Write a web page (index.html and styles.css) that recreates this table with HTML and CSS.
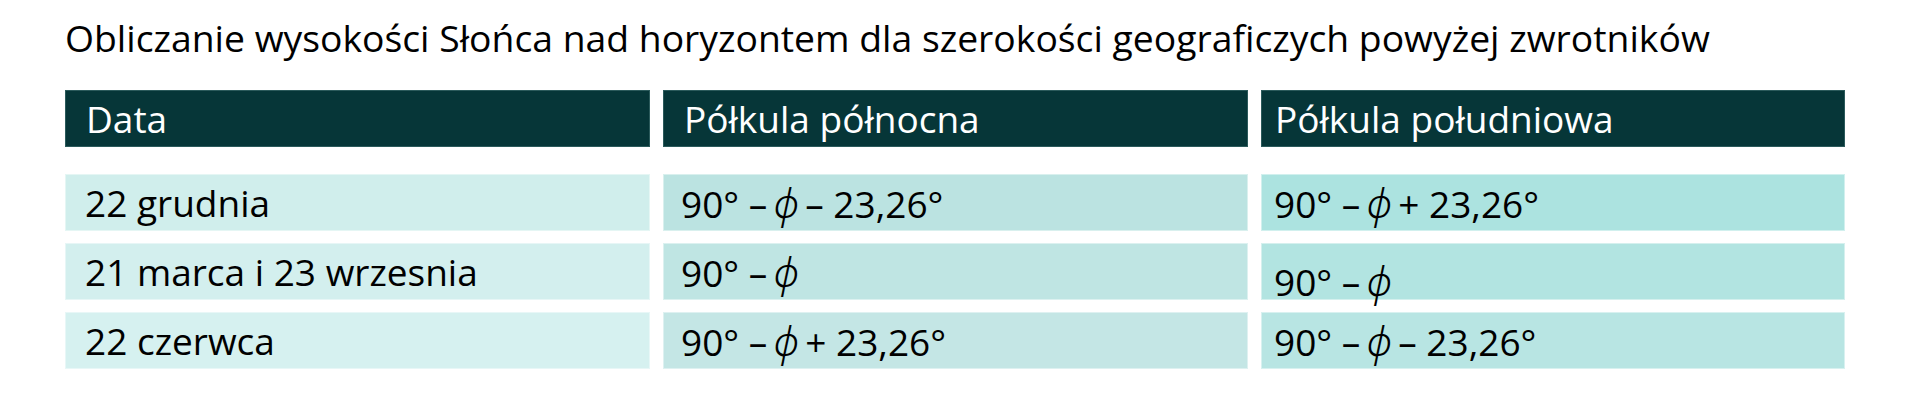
FILE: index.html
```html
<!DOCTYPE html>
<html lang="pl">
<head>
<meta charset="utf-8">
<title>Obliczanie wysokości Słońca</title>
<link rel="stylesheet" href="styles.css">
</head>
<body>
<h1 class="title">Obliczanie wysokości Słońca nad horyzontem dla szerokości geograficzych powyżej zwrotników</h1>
<div class="grid heads">
  <div class="head c1">Data</div>
  <div class="head c2">Półkula północna</div>
  <div class="head c3">Półkula południowa</div>
</div>
<div class="grid rows">
  <div class="cell c1 r1">22 grudnia</div>
  <div class="cell c2 r1">90° –&#8201;<span class="phi">ϕ</span>&#8201;– 23,26°</div>
  <div class="cell c3 r1">90° –&#8201;<span class="phi">ϕ</span>&#8201;+ 23,26°</div>

  <div class="cell c1 r2">21 marca i 23 wrzesnia</div>
  <div class="cell c2 r2">90° –&#8201;<span class="phi">ϕ</span></div>
  <div class="cell c3 r2 low">90° –&#8201;<span class="phi">ϕ</span></div>

  <div class="cell c1 r3">22 czerwca</div>
  <div class="cell c2 r3">90° –&#8201;<span class="phi">ϕ</span>&#8201;+ 23,26°</div>
  <div class="cell c3 r3">90° –&#8201;<span class="phi">ϕ</span>&#8201;– 23,26°</div>
</div>
</body>
</html>
```
FILE: styles.css
```css
html, body {
  margin: 0;
  padding: 0;
  background: #ffffff;
}
body {
  padding: 13px 0 0 65px;
  font-family: "Open Sans", "DejaVu Sans", sans-serif;
  color: #000;
}
.title {
  margin: 0;
  font-size: 37.3px;
  font-weight: 400;
  line-height: 50px;
  white-space: nowrap;
}
.grid {
  width: 1780px;
  display: grid;
  grid-template-columns: 585px 585px 584px;
  grid-auto-rows: 57px;
  column-gap: 13px;
  row-gap: 12px;
}
.heads { margin-top: 27px; }
.rows { margin-top: 27px; }
.head {
  background: #063638;
  border: 1px solid #2b5a5b;
  color: #ffffff;
  font-size: 37px;
  line-height: 55px;
  padding-left: 20px;
  white-space: nowrap;
}
.head.c3 { padding-left: 13px; }
.cell {
  font-size: 37px;
  line-height: 55px;
  padding-left: 19px;
  border: 1px solid rgba(255,255,255,0.45);
  white-space: nowrap;
}
.cell.c2 { padding-left: 17px; }
.cell.c3 { padding-left: 12px; }
.cell.low { padding-top: 9px; }
.phi {
  font-family: "Noto Sans", "Inter", "DejaVu Sans", sans-serif;
  font-style: italic;
  font-weight: 300;
  font-size: 40px;
}
.c1.r1 { background: #d0eeec; }
.c1.r2 { background: #d3efee; }
.c1.r3 { background: #d6f1f0; }
.c2.r1 { background: #bbe3e1; }
.c2.r2 { background: #bfe5e3; }
.c2.r3 { background: #c4e6e5; }
.c3.r1 { background: #ace3e0; }
.c3.r2 { background: #b2e4e1; }
.c3.r3 { background: #b8e5e3; }
```
